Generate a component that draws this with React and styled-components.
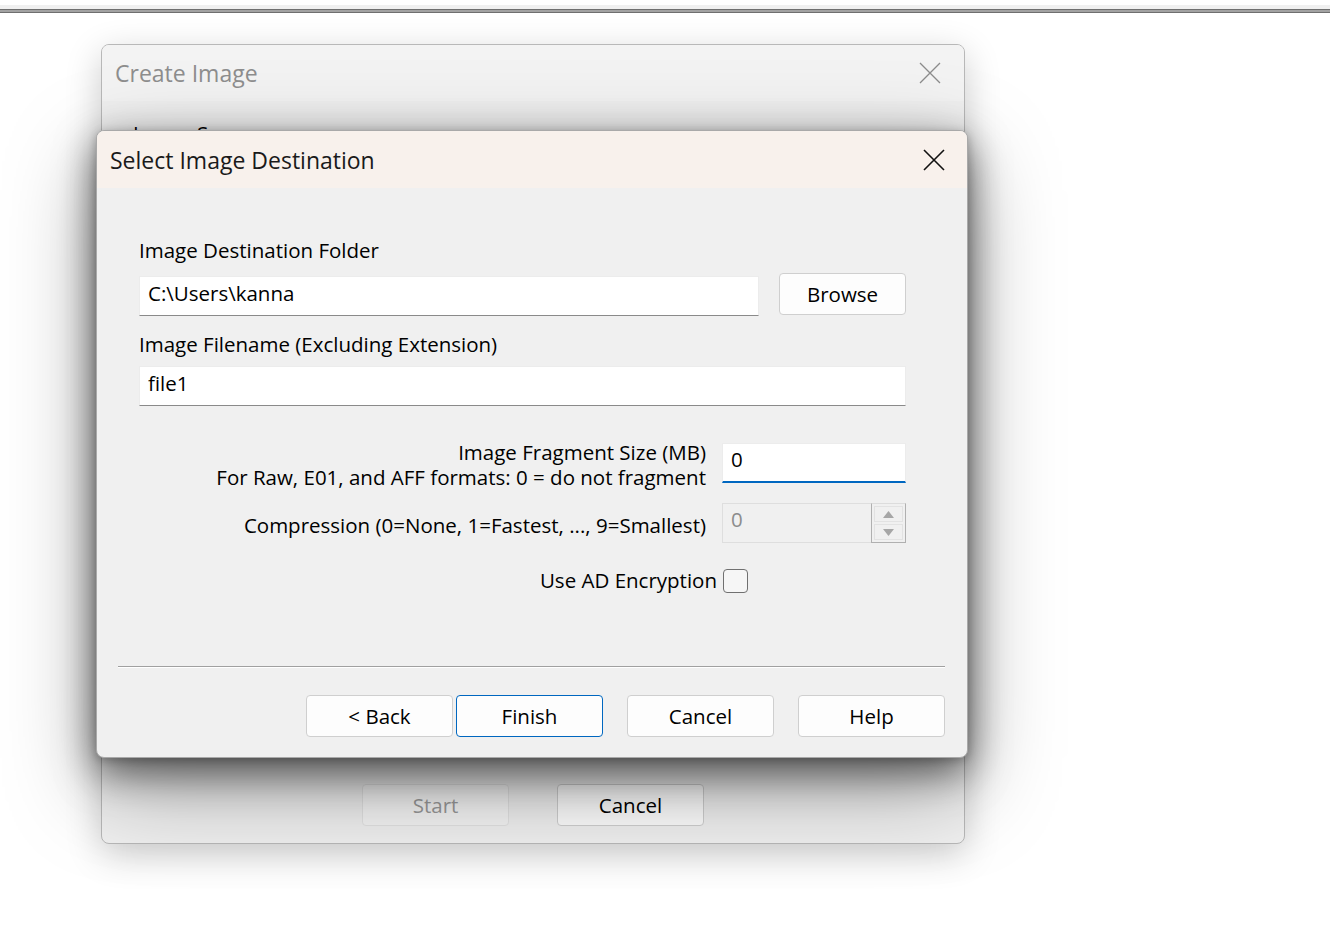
import React from "react";
import styled, { createGlobalStyle } from "styled-components";

const GlobalStyle = createGlobalStyle`
  html, body {
    margin: 0;
    padding: 0;
    background: #ffffff;
    font-family: "Open Sans", "Noto Sans", "DejaVu Sans", sans-serif;
    color: #000;
  }
  * { box-sizing: border-box; }
`;

const Page = styled.div`
  width: 1330px;
  height: 931px;
  overflow: hidden;
  background: #fff;
`;

const TopStrip = styled.div`
  margin-top: 5px;
  height: 4px;
  background: #f0f0f0;
`;

const TopRule = styled.div`
  height: 4px;
  background: #a2a2a2;
  border-top: 1px solid #6f6f6f;
  border-bottom: 1px solid #6f6f6f;
`;

const Desktop = styled.div`
  position: relative;
  height: 918px;
`;

/* windows sit on the desktop canvas at their own spot */
const Window = styled.div`
  position: absolute;
  left: ${p => p.$x}px;
  top: ${p => p.$y}px;
  width: ${p => p.$w}px;
  height: ${p => p.$h}px;
  display: flex;
  flex-direction: column;
  background: #f0f0f0;
  border: 1px solid ${p => (p.$active ? "#a9a9a9" : "#b8b8b8")};
  border-radius: 8px;
  overflow: hidden;
  box-shadow: ${p =>
    p.$active
      ? "0 14px 38px rgba(0,0,0,0.55), 0 30px 90px rgba(0,0,0,0.35), 0 2px 8px rgba(0,0,0,0.2)"
      : "0 10px 36px rgba(0,0,0,0.2)"};
`;

const TitleBar = styled.div`
  flex: none;
  height: ${p => p.$h}px;
  display: flex;
  align-items: center;
  justify-content: space-between;
  padding: 0 ${p => p.$pr}px 0 ${p => p.$pl}px;
  background: ${p => p.$bg};
`;

const TitleText = styled.div`
  font-size: 23px;
  line-height: 28px;
  color: ${p => (p.$dim ? "#8e8e8e" : "#1a1a1a")};
`;

const CloseIcon = ({ color, width }) => (
  <svg width="22" height="22" viewBox="0 0 22 22">
    <path d="M1 1 L21 21 M21 1 L1 21" stroke={color} strokeWidth={width} fill="none" />
  </svg>
);

const BackBody = styled.div`
  flex: 1;
  padding: 19px 31px 0;
`;

const GroupLabel = styled.div`
  font-size: 20.5px;
  line-height: 26px;
`;

const BackFooter = styled.div`
  flex: none;
  display: flex;
  justify-content: center;
  gap: 48px;
  padding-bottom: 17px;
`;

const Button = styled.button`
  width: 147px;
  height: 42px;
  padding: 0;
  font-family: inherit;
  font-size: 20.5px;
  color: ${p => (p.disabled ? "#9a9a9a" : "#000")};
  background: ${p => (p.disabled ? "#f5f5f5" : "#fdfdfd")};
  border: 1px solid ${p => (p.$primary ? "#0067c0" : p.disabled ? "#e3e3e3" : "#cfcfcf")};
  border-radius: 4px;
`;

const BrowseButton = styled(Button)`
  width: 127px;
`;

const Form = styled.div`
  flex: 1;
  display: flex;
  flex-direction: column;
  padding: 49px 61px 0 42px;
`;

const Label = styled.div`
  font-size: 20.5px;
  line-height: 26px;
  margin-top: ${p => p.$mt || 0}px;
`;

const FolderRow = styled.div`
  display: flex;
  align-items: flex-start;
  gap: 20px;
  margin-top: 10px;
`;

const TextField = styled.input`
  display: block;
  width: ${p => (p.$grow ? "auto" : "100%")};
  flex: ${p => (p.$grow ? 1 : "none")};
  height: 40px;
  margin: ${p => p.$mt || 0}px 0 0;
  padding: 0 8px 7px;
  font-family: inherit;
  font-size: 20.5px;
  color: #000;
  background: #fff;
  border: 1px solid #ececec;
  border-bottom: ${p => (p.$focus ? "2px solid #0067c0" : "1px solid #8a8a8a")};
  border-radius: 0;
  outline: none;
`;

const OptionGrid = styled.div`
  display: grid;
  grid-template-columns: 1fr 184px;
  column-gap: 16px;
  align-items: start;
  margin-top: ${p => p.$mt}px;
`;

const RightLabel = styled.div`
  text-align: right;
  font-size: 20.5px;
  line-height: 25px;
  padding-top: ${p => p.$pt || 0}px;
`;

const Spinner = styled.div`
  display: flex;
  height: 40px;
  background: #f0f0f0;
  border: 1px solid #dedede;
  border-right: none;
`;

const SpinValue = styled.div`
  flex: 1;
  padding: 2px 8px 0;
  font-size: 20.5px;
  line-height: 26px;
  color: #8c8c8c;
`;

const SpinButtons = styled.div`
  width: 35px;
  margin: -1px 0 -1px;
  display: flex;
  flex-direction: column;
  gap: 2px;
  padding: 2px;
  border: 1px solid #b0b0b0;
  border-top-color: #dcdcdc;
`;

const SpinButton = styled.div`
  flex: 1;
  display: flex;
  align-items: center;
  justify-content: center;
  border: 1px solid #e2e2e2;
  background: #f0f0f0;
`;

const Arrow = ({ up }) => (
  <svg width="11" height="7" viewBox="0 0 11 7">
    <path d={up ? "M5.5 0 L11 7 L0 7 Z" : "M0 0 L11 0 L5.5 7 Z"} fill="#a6a6a6" />
  </svg>
);

const CheckRow = styled.div`
  display: flex;
  justify-content: flex-end;
  align-items: center;
  gap: 6px;
  margin-top: 25px;
  padding-right: 158px;
`;

const CheckBox = styled.span`
  width: 25px;
  height: 24px;
  border: 1px solid #707070;
  border-radius: 4px;
  background: #f6f6f6;
`;

const Footer = styled.div`
  flex: none;
  padding: 0 22px 20px 21px;
`;

const Separator = styled.div`
  height: 2px;
  border-top: 1px solid #a0a0a0;
  border-bottom: 1px solid #ffffff;
  margin-bottom: 27px;
`;

const ButtonBar = styled.div`
  display: flex;
  justify-content: flex-end;
  gap: 24px;
`;

const ButtonPair = styled.div`
  display: flex;
  gap: 3px;
`;

export default function App() {
  return (
    <Page>
      <GlobalStyle />
      <TopStrip />
      <TopRule />
      <Desktop>
        <Window $x={101} $y={31} $w={864} $h={800}>
          <TitleBar $h={56} $pl={13} $pr={23} $bg="#f3f3f3">
            <TitleText $dim>Create Image</TitleText>
            <CloseIcon color="#8c8c8c" width={1.3} />
          </TitleBar>
          <BackBody>
            <GroupLabel>Image Source</GroupLabel>
          </BackBody>
          <BackFooter>
            <Button disabled>Start</Button>
            <Button>Cancel</Button>
          </BackFooter>
        </Window>

        <Window $x={96} $y={117} $w={872} $h={628} $active>
          <TitleBar $h={57} $pl={13} $pr={22} $bg="#f8f1ec">
            <TitleText>Select Image Destination</TitleText>
            <CloseIcon color="#111" width={1.6} />
          </TitleBar>
          <Form>
            <Label>Image Destination Folder</Label>
            <FolderRow>
              <TextField $grow $mt={3} readOnly value="C:\Users\kanna" />
              <BrowseButton>Browse</BrowseButton>
            </FolderRow>
            <Label $mt={15}>Image Filename (Excluding Extension)</Label>
            <TextField $mt={9} readOnly value="file1" />

            <OptionGrid $mt={34}>
              <RightLabel>
                Image Fragment Size (MB)
                <br />
                For Raw, E01, and AFF formats: 0 = do not fragment
              </RightLabel>
              <TextField $mt={3} $focus readOnly value="0" />
            </OptionGrid>

            <OptionGrid $mt={13}>
              <RightLabel $pt={10}>Compression (0=None, 1=Fastest, ..., 9=Smallest)</RightLabel>
              <Spinner>
                <SpinValue>0</SpinValue>
                <SpinButtons>
                  <SpinButton><Arrow up /></SpinButton>
                  <SpinButton><Arrow /></SpinButton>
                </SpinButtons>
              </Spinner>
            </OptionGrid>

            <CheckRow>
              <RightLabel>Use AD Encryption</RightLabel>
              <CheckBox />
            </CheckRow>
          </Form>
          <Footer>
            <Separator />
            <ButtonBar>
              <ButtonPair>
                <Button>&lt; Back</Button>
                <Button $primary>Finish</Button>
              </ButtonPair>
              <Button>Cancel</Button>
              <Button>Help</Button>
            </ButtonBar>
          </Footer>
        </Window>
      </Desktop>
    </Page>
  );
}
